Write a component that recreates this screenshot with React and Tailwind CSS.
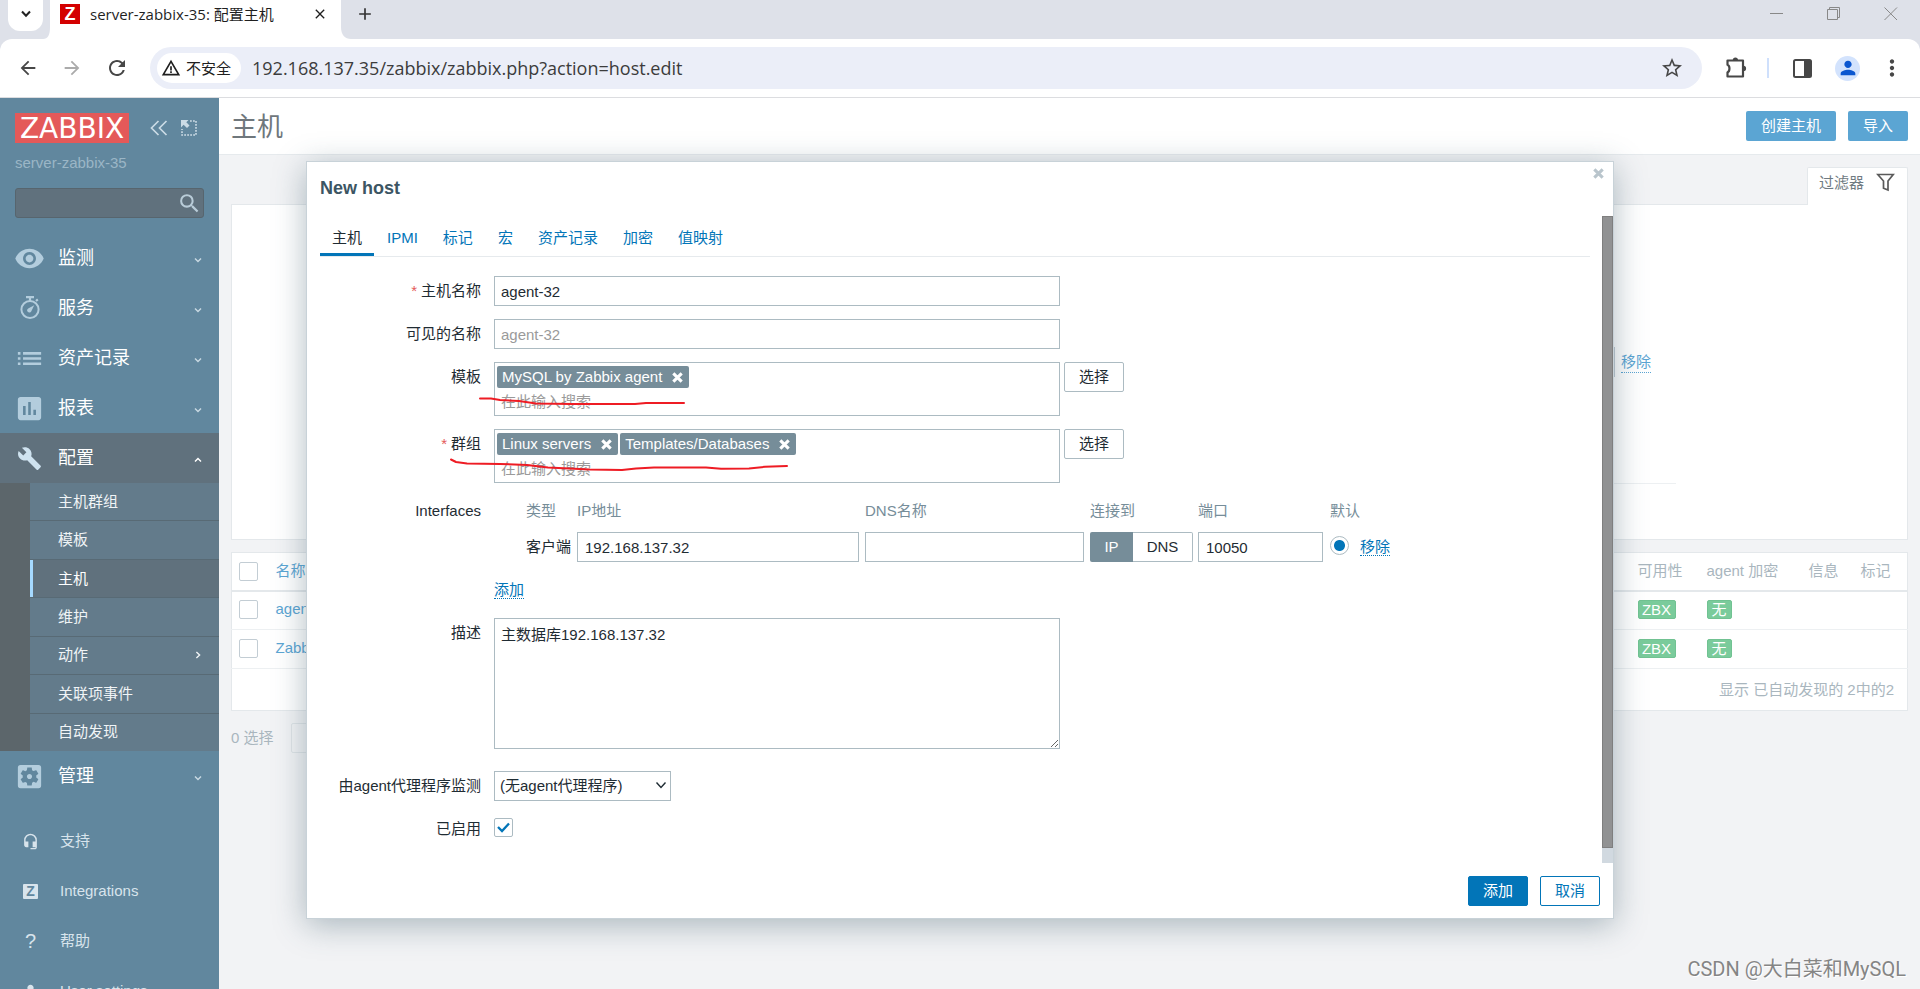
import { useState } from "react";
import {
  MdVisibility,
  MdList,
  MdPoll,
  MdBuild,
  MdSettingsApplications,
  MdArrowBack,
  MdArrowForward,
  MdRefresh,
  MdStarBorder,
  MdPerson,
  MdMoreVert,
  MdWarningAmber,
  MdClose,
  MdAdd,
  MdHeadsetMic,
  MdSearch,
} from "react-icons/md";

const CONFIG_ITEMS = [
  { label: "主机群组" },
  { label: "模板" },
  { label: "主机", active: true },
  { label: "维护" },
  { label: "动作", sub: true },
  { label: "关联项事件" },
  { label: "自动发现" },
];

const TABS = ["主机", "IPMI", "标记", "宏", "资产记录", "加密", "值映射"];

const HOSTS = ["agent", "Zabbix server"];

function StopwatchIcon() {
  return (
    <svg width="22" height="24" viewBox="0 0 22 24" fill="none">
      <path d="M7 1.2h8M11 2v3M17 5l1.8-1.6" stroke="currentColor" strokeWidth="2.2" />
      <circle cx="11" cy="13.5" r="8.6" stroke="currentColor" strokeWidth="2" />
      <path d="M15.2 9.2 9.2 12.4a2.2 2.2 0 1 0 3 3z" fill="currentColor" />
    </svg>
  );
}

function Chevron({ className }) {
  return (
    <svg className={className} width="8" height="8" viewBox="0 0 8 8" fill="none">
      <path d="M1 2.4 4 5.6 7 2.4" stroke="currentColor" strokeWidth="1.4" />
    </svg>
  );
}

function BoldCross({ size = 10 }) {
  return (
    <svg width={size} height={size} viewBox="0 0 10 10">
      <path d="M1.2 1.2 8.8 8.8M8.8 1.2 1.2 8.8" stroke="currentColor" strokeWidth="2.8" />
    </svg>
  );
}

function BrowserBar() {
  return (
    <div className="bg-[#dee1e9] font-['Open_Sans','Noto_Sans_CJK_SC',sans-serif]">
      <div className="flex h-[39px] items-start">
        <button className="ml-2 flex h-[31px] w-[35px] items-center justify-center rounded-b-xl bg-white pb-1">
          <svg width="10" height="10" viewBox="0 0 10 10" fill="none">
            <path d="M1 2.5 5 6.8 9 2.5" stroke="#222" strokeWidth="2" />
          </svg>
        </button>
        <svg className="mt-[27px]" width="7" height="12" viewBox="0 0 7 12">
          <path d="M7 0v12H0C5 12 7 8 7 0z" fill="#fff" />
        </svg>
        <div className="flex h-[39px] w-[291px] items-start bg-white pl-[10px] pr-[13px] pt-1">
          <span className="flex h-5 w-5 items-center justify-center bg-[#d40000] font-['Liberation_Sans',sans-serif] text-lg font-bold leading-5 text-white">
            Z
          </span>
          <span className="ml-[10px] flex-1 whitespace-nowrap text-[15px] leading-5 text-[#1f1f1f]">
            server-zabbix-35: 配置主机
          </span>
          <button aria-label="Close tab" className="mt-[2px] text-[#1f1f1f]">
            <MdClose size={16} />
          </button>
        </div>
        <svg className="mt-[27px]" width="10" height="12" viewBox="0 0 10 12">
          <path d="M0 0v12h10C4 12 0 8 0 0z" fill="#fff" />
        </svg>
        <button aria-label="New tab" className="ml-1 mt-1 text-[#333]">
          <MdAdd size={20} />
        </button>
        <div className="ml-auto mr-[22px] mt-[7px] flex gap-[43px] text-[#888]">
          <button aria-label="Minimize">
            <svg width="14" height="14" viewBox="0 0 14 14">
              <path d="M0 6.5h13" stroke="currentColor" />
            </svg>
          </button>
          <button aria-label="Restore">
            <svg width="14" height="14" viewBox="0 0 14 14" fill="none" stroke="currentColor">
              <path d="M.5 2.5h10v10H.5zM2.5 2.5v-2h10v10h-2" />
            </svg>
          </button>
          <button aria-label="Close window">
            <svg width="14" height="14" viewBox="0 0 14 14" stroke="currentColor">
              <path d="M.5.5l12.5 12.5M13 .5.5 13" />
            </svg>
          </button>
        </div>
      </div>
      <div className="flex h-[59px] items-center rounded-t-xl border-b border-[#dcdde0] bg-white pl-[17px] pr-[15px] text-[#474747]">
        <button aria-label="Back">
          <MdArrowBack size={22} />
        </button>
        <button aria-label="Forward" className="ml-[22px] text-[#ababab]">
          <MdArrowForward size={22} />
        </button>
        <button aria-label="Reload" className="ml-[22px]">
          <MdRefresh size={24} />
        </button>
        <div className="ml-[21px] flex h-[42px] flex-1 items-center rounded-full bg-[#ebeef8] pl-[7px] pr-[18px]">
          <span className="flex h-[30px] items-center gap-[5px] rounded-full bg-white pl-1 pr-[10px] text-[15px] leading-5 text-[#1f1f1f]">
            <MdWarningAmber size={20} />
            不安全
          </span>
          <input
            aria-label="Address"
            className="ml-[11px] flex-1 bg-transparent text-lg leading-6 text-[#3c3c3c] outline-none"
            defaultValue="192.168.137.35/zabbix/zabbix.php?action=host.edit"
          />
          <button aria-label="Bookmark">
            <MdStarBorder size={24} />
          </button>
        </div>
        <button aria-label="Extensions" className="ml-[23px]">
          <svg width="22" height="22" viewBox="0 0 22 22" fill="none">
            <path
              d="M2.500 3.500h15.500v16H2.500v-4.200c2.600-.9 2.600-6.700 0-7.600z"
              stroke="#474747"
              strokeWidth="2.200"
              strokeLinejoin="round"
            />
            <path d="M7.800 3a2.600 2.600 0 0 1 5.200 0zM18.500 8.800a2.600 2.600 0 0 1 0 5.200z" fill="#474747" />
          </svg>
        </button>
        <span className="ml-5 h-5 w-[2px] bg-[#cfe0fc]" />
        <button aria-label="Side panel" className="ml-6">
          <svg width="19" height="19" viewBox="0 0 19 19">
            <rect x="1" y="1" width="17" height="17" rx="1.5" fill="none" stroke="#474747" strokeWidth="2" />
            <path d="M11 1h7v17h-7z" fill="#474747" />
          </svg>
        </button>
        <span className="ml-[23px] flex h-[25px] w-[25px] items-center justify-center rounded-full bg-[#d3e3fd] text-[#0b57d0]">
          <MdPerson size={22} />
        </span>
        <button aria-label="Menu" className="ml-[19px]">
          <MdMoreVert size={26} />
        </button>
      </div>
    </div>
  );
}

function MenuRow({ icon, label, open }) {
  return (
    <a
      href="#"
      className={
        open
          ? "flex h-[50px] items-center bg-[#60717d] pl-[14px] pr-[17px] text-white"
          : "flex h-[50px] items-center pl-[14px] pr-[17px] text-white"
      }
    >
      <span
        className={
          open
            ? "flex w-[31px] justify-center text-[#cfe3f0]"
            : "flex w-[31px] justify-center text-[#b3cddd]"
        }
      >
        {icon}
      </span>
      <span className="ml-[13px] flex-1 text-lg leading-6">{label}</span>
      <Chevron className={open ? "mt-1 rotate-180" : "mt-1 text-[#c8d8e2]"} />
    </a>
  );
}

function FooterRow({ icon, label }) {
  return (
    <a href="#" className="flex h-[50px] shrink-0 items-center pl-[21px] text-[15px] leading-5 text-[#d8e4ec]">
      <span className="flex w-[19px] justify-center">{icon}</span>
      <span className="ml-5">{label}</span>
    </a>
  );
}

function Sidebar() {
  return (
    <nav className="flex w-[219px] shrink-0 flex-col overflow-hidden bg-[#61879e]">
      <div className="flex items-center pl-[15px] pt-[15px]">
        <a
          href="#"
          className="flex h-[30px] w-[114px] items-center justify-center bg-[#e45959] pt-[2px] font-['DejaVu_Sans',sans-serif] text-[28px] leading-7 text-white"
        >
          ZABBIX
        </a>
        <button aria-label="Collapse sidebar" className="ml-[21px] text-[#cbdbe5]">
          <svg width="18" height="16" viewBox="0 0 18 16" fill="none">
            <path d="M8.5 1 1.5 8l7 7M16.5 1l-7 7 7 7" stroke="currentColor" strokeWidth="1.7" />
          </svg>
        </button>
        <button aria-label="Hide sidebar" className="ml-[13px] text-[#cbdbe5]">
          <svg width="16" height="16" viewBox="0 0 16 16" fill="none">
            <path d="M9 1h6v14H1V9" stroke="currentColor" strokeWidth="1.6" strokeDasharray="1.8 1.2" />
            <path d="M0 0h7.5L5.3 2.2 8.5 5.4 6 8 2.6 4.800 0 7.500z" fill="currentColor" />
          </svg>
        </button>
      </div>
      <div className="pl-[15px] pt-[10px] text-[15px] leading-5 text-[#9bb6c6]">server-zabbix-35</div>
      <div className="mx-[15px] mt-[15px] flex h-[30px] shrink-0 items-center rounded-[3px] border border-[#57656e] bg-[#60717d] pr-[1px]">
        <input aria-label="Search" className="w-full flex-1 bg-transparent px-2 text-white outline-none" />
        <button aria-label="Search" className="text-[#b9ccd8]">
          <MdSearch size={25} />
        </button>
      </div>
      <div className="mt-[15px]">
        <MenuRow icon={<MdVisibility size={31} />} label="监测" />
        <MenuRow icon={<StopwatchIcon />} label="服务" />
        <MenuRow icon={<MdList size={31} />} label="资产记录" />
        <MenuRow icon={<MdPoll size={31} />} label="报表" />
        <MenuRow icon={<MdBuild size={25} />} label="配置" open />
        <ul className="flex h-[268px] flex-col bg-[#5c666b] pl-[30px] text-[15px] leading-5 text-[#f0f4f6]">
          {CONFIG_ITEMS.map((item) => (
            <li
              key={item.label}
              className="flex-1 border-b border-[#586a75] bg-[#637b8b] last:border-b-0"
            >
              <a
                href="#"
                className={
                  item.active
                    ? "flex h-full items-center border-l-3 border-[#a5d9ff] bg-[#60717d] pl-[25px] pr-[17px] text-white"
                    : "flex h-full items-center pl-7 pr-[17px]"
                }
              >
                <span className="flex-1">{item.label}</span>
                {item.sub && <Chevron className="-rotate-90" />}
              </a>
            </li>
          ))}
        </ul>
        <MenuRow icon={<MdSettingsApplications size={31} />} label="管理" />
      </div>
      <div className="mt-[15px]">
        <FooterRow icon={<MdHeadsetMic size={17} />} label="支持" />
        <FooterRow
          icon={
            <span className="flex h-[15px] w-[15px] items-center justify-center rounded-[1px] bg-[#d8e4ec] text-sm font-bold leading-[15px] text-[#61879e]">
              Z
            </span>
          }
          label="Integrations"
        />
        <FooterRow icon={<span className="text-xl">?</span>} label="帮助" />
        <FooterRow icon={<MdPerson size={22} />} label="User settings" />
      </div>
    </nav>
  );
}

function HostList() {
  return (
    <main className="flex-1 bg-[#f2f3f5]">
      <header className="flex h-[57px] items-center border-b border-[#e6eaed] bg-white pl-3 pr-3">
        <h1 className="flex-1 pt-[2px] text-[26px] leading-8 text-[#6f777c]">主机</h1>
        <button className="h-[30px] rounded-[2px] bg-[#5ba5d3] px-[15px] text-[15px] leading-5 text-white">
          创建主机
        </button>
        <button className="ml-3 h-[30px] rounded-[2px] bg-[#5ba5d3] px-[15px] text-[15px] leading-5 text-white">
          导入
        </button>
      </header>

      <div className="px-3 pt-3">
        <div className="flex justify-end">
          <button className="-mb-px flex h-[38px] w-[101px] items-start rounded-t-[2px] border border-b-0 border-[#e4e8eb] bg-white pl-[11px] pt-[5px] text-[15px] leading-5 text-[#6f7b82]">
            过滤器
            <svg className="ml-3" width="19" height="19" viewBox="0 0 19 19" fill="none">
              <path d="M1.800 1.500h15.400L12 8v9l-4.500-1.800V8z" stroke="#5a5a5a" strokeWidth="1.7" />
            </svg>
          </button>
        </div>
        <section className="flex h-[336px] flex-col items-end border border-[#e4e8eb] bg-white pr-[231px]">
          <div className="mt-[142px] flex items-center pr-[25px]">
            <input
              aria-label="Tag value"
              className="mr-[6px] h-[30px] w-[180px] border border-[#c3cdd4] bg-white"
            />
            <a
              href="#"
              className="border-b border-dotted border-[#5ba5d3] text-[15px] leading-5 text-[#5ba5d3]"
            >
              移除
            </a>
          </div>
          <div className="mt-[106px] h-px w-[400px] bg-[#edf0f2]" />
        </section>

        <table className="mt-3 w-full border border-[#e4e8eb] bg-white text-left text-[15px] leading-5 text-[#a9b6be]">
          <thead>
            <tr className="h-[38px] border-b-2 border-[#e4e8eb]">
              <th className="w-11 pl-[7px]">
                <input
                  type="checkbox"
                  aria-label="Select all"
                  className="block h-[19px] w-[19px] appearance-none rounded-[2px] border border-[#c3cdd4] bg-white"
                />
              </th>
              <th className="font-normal text-[#5ba5d3]">名称</th>
              <th className="w-[69px] font-normal">可用性</th>
              <th className="w-[102px] font-normal">agent 加密</th>
              <th className="w-[52px] font-normal">信息</th>
              <th className="w-[47px] font-normal">标记</th>
            </tr>
          </thead>
          <tbody>
            {HOSTS.map((host) => (
              <tr key={host} className="h-[39px] border-b border-[#edf0f2]">
                <td className="pb-[2px] pl-[7px]">
                  <input
                    type="checkbox"
                    aria-label={host}
                    className="block h-[19px] w-[19px] appearance-none rounded-[2px] border border-[#c3cdd4] bg-white"
                  />
                </td>
                <td className="pb-[2px]">
                  <a href="#" className="text-[#5ba5d3]">
                    {host}
                  </a>
                </td>
                <td className="pb-[2px]">
                  <span className="block h-[19px] w-[38px] rounded-[2px] border border-[#71c292] bg-[#7acb9b] text-center leading-[17px] text-white">
                    ZBX
                  </span>
                </td>
                <td className="pb-[2px]">
                  <span className="block h-[19px] w-[25px] rounded-[2px] border border-[#71c292] bg-[#7acb9b] text-center leading-[17px] text-white">
                    无
                  </span>
                </td>
                <td />
                <td />
              </tr>
            ))}
            <tr className="h-[42px]">
              <td colSpan={6} className="pr-[13px] text-right">
                显示 已自动发现的 2中的2
              </td>
            </tr>
          </tbody>
        </table>

        <div className="mt-3 flex items-center text-[15px] leading-5 text-[#a9b6be]">
          <span>0 选择</span>
          <button disabled className="ml-[17px] h-[30px] rounded-[2px] border border-[#dfe4e7] px-[15px]">
            启用
          </button>
        </div>
      </div>
    </main>
  );
}

function FormRow({ label, required, htmlFor, children }) {
  return (
    <div className="grid grid-cols-[161px_1fr] items-start gap-x-[13px]">
      <label htmlFor={htmlFor} className="text-right leading-[30px]">
        {required && <span className="mr-1 text-[#e45959]">*</span>}
        {label}
      </label>
      <div>{children}</div>
    </div>
  );
}

function MultiSelect({ id, items }) {
  return (
    <div className="flex items-start gap-1">
      <div className="h-[54px] w-[566px] border border-[#acbbc2] pl-[2px] pt-[3px]">
        <ul className="flex gap-[2px]">
          {items.map((item) => (
            <li
              key={item}
              className="flex h-[22px] items-center rounded-[2px] bg-[#768d99] pl-[5px] pr-[6px] text-white"
            >
              <span className="leading-5">{item}</span>
              <button type="button" aria-label={"Remove " + item} className="ml-[10px]">
                <BoldCross size={11} />
              </button>
            </li>
          ))}
        </ul>
        <input
          id={id}
          placeholder="在此输入搜索"
          className="block h-[26px] w-[300px] bg-transparent pl-1 leading-5 outline-none placeholder:text-[#9a9a9a]"
        />
      </div>
      <button type="button" className="h-[30px] rounded-[2px] border border-[#acbbc2] px-[14px] leading-5">
        选择
      </button>
    </div>
  );
}

function InterfacesTable() {
  return (
    <table className="w-[897px] table-fixed text-left">
      <colgroup>
        <col className="w-[83px]" />
        <col className="w-[288px]" />
        <col className="w-[225px]" />
        <col className="w-[108px]" />
        <col className="w-[132px]" />
        <col className="w-[30px]" />
        <col className="w-[31px]" />
      </colgroup>
      <thead>
        <tr className="h-9 align-top leading-[30px] text-[#768d99]">
          <th className="pl-8 font-normal">类型</th>
          <th className="font-normal">IP地址</th>
          <th className="font-normal">DNS名称</th>
          <th className="font-normal">连接到</th>
          <th className="font-normal">端口</th>
          <th className="whitespace-nowrap font-normal" colSpan={2}>
            默认
          </th>
        </tr>
      </thead>
      <tbody>
        <tr className="h-[30px]">
          <td className="pl-8">客户端</td>
          <td>
            <input
              aria-label="IP地址"
              defaultValue="192.168.137.32"
              className="block h-[30px] w-[282px] border border-[#acbbc2] px-[7px] outline-none"
            />
          </td>
          <td>
            <input
              aria-label="DNS名称"
              className="block h-[30px] w-[219px] border border-[#acbbc2] px-[7px] outline-none"
            />
          </td>
          <td>
            <div className="flex h-[30px] w-[103px]">
              <button type="button" className="w-[43px] rounded-l-[2px] bg-[#768d99] text-white">
                IP
              </button>
              <button
                type="button"
                className="flex-1 rounded-r-[2px] border border-l-0 border-[#acbbc2] text-center"
              >
                DNS
              </button>
            </div>
          </td>
          <td>
            <input
              aria-label="端口"
              defaultValue="10050"
              className="block h-[30px] w-[125px] border border-[#acbbc2] px-[7px] outline-none"
            />
          </td>
          <td>
            <input
              type="radio"
              name="default-interface"
              aria-label="默认"
              defaultChecked
              className="mb-1 block h-[19px] w-[19px] appearance-none rounded-full border border-[#acbbc2] checked:bg-[radial-gradient(circle,#0275b8_5px,#fff_6px)]"
            />
          </td>
          <td className="whitespace-nowrap">
            <a href="#" className="border-b border-dotted border-[#0275b8] text-[#0275b8]">
              移除
            </a>
          </td>
        </tr>
      </tbody>
    </table>
  );
}

function NewHostDialog() {
  const [tab, setTab] = useState("主机");

  return (
    <div
      role="dialog"
      aria-label="New host"
      className="absolute left-1/2 top-[161px] w-[1308px] max-w-full -translate-x-1/2 border border-[#c8d2d8] bg-white text-[15px] leading-5 text-[#1f2c33] shadow-[0_6px_30px_rgba(60,90,105,0.4)]"
    >
      <div className="flex h-[54px] items-start justify-between pl-[13px] pr-[9px] pt-[6px]">
        <h2 className="mt-2 text-lg font-bold leading-6 text-[#3c5563]">New host</h2>
        <button aria-label="Close" className="text-[#b9c5cc]">
          <BoldCross size={11} />
        </button>
      </div>

      <div className="flex">
        <form className="min-w-0 flex-1 pb-[19px] pl-[13px] pr-3">
          <div role="tablist" className="flex h-[41px] gap-px border-b border-[#e6eaed]">
            {TABS.map((name) => (
              <button
                key={name}
                type="button"
                role="tab"
                aria-selected={tab === name}
                onClick={() => setTab(name)}
                className={
                  tab === name
                    ? "border-b-3 border-[#0275b8] px-3 pt-[7px]"
                    : "border-b-3 border-transparent px-3 pt-[7px] text-[#0275b8]"
                }
              >
                {name}
              </button>
            ))}
          </div>

          <div className="mt-[19px] flex flex-col gap-[13px]">
            <FormRow label="主机名称" required htmlFor="host">
              <input
                id="host"
                defaultValue="agent-32"
                className="block h-[30px] w-[566px] border border-[#acbbc2] px-[6px] outline-none"
              />
            </FormRow>
            <FormRow label="可见的名称" htmlFor="visible-name">
              <input
                id="visible-name"
                placeholder="agent-32"
                className="block h-[30px] w-[566px] border border-[#acbbc2] px-[6px] outline-none placeholder:text-[#9a9a9a]"
              />
            </FormRow>
            <FormRow label="模板" htmlFor="templates">
              <MultiSelect id="templates" items={["MySQL by Zabbix agent"]} />
            </FormRow>
            <FormRow label="群组" required htmlFor="groups">
              <MultiSelect id="groups" items={["Linux servers", "Templates/Databases"]} />
            </FormRow>
            <FormRow label="Interfaces">
              <InterfacesTable />
              <div className="mt-[13px] h-[30px] pt-[5px]">
                <a href="#" className="border-b border-dotted border-[#0275b8] text-[#0275b8]">
                  添加
                </a>
              </div>
            </FormRow>
            <FormRow label="描述" htmlFor="description">
              <div className="h-[140px]">
                <textarea
                  id="description"
                  defaultValue="主数据库192.168.137.32"
                  className="block h-[131px] w-[566px] border border-[#acbbc2] px-[6px] py-[6px] outline-none"
                />
              </div>
            </FormRow>
            <FormRow label="由agent代理程序监测" htmlFor="proxy">
              <div className="relative w-[177px]">
                <select
                  id="proxy"
                  className="block h-[30px] w-full appearance-none border border-[#acbbc2] bg-white px-[5px] outline-none"
                >
                  <option>(无agent代理程序)</option>
                </select>
                <svg
                  className="pointer-events-none absolute right-1 top-[10px]"
                  width="12"
                  height="9"
                  viewBox="0 0 12 9"
                  fill="none"
                >
                  <path d="M1.500 1.500 6 6.500l4.500-5" stroke="#1f2c33" strokeWidth="1.4" />
                </svg>
              </div>
            </FormRow>
            <FormRow label="已启用" htmlFor="enabled">
              <div className="flex h-[30px] items-start pt-1">
                <span className="relative">
                  <input
                    id="enabled"
                    type="checkbox"
                    defaultChecked
                    className="peer block h-[19px] w-[19px] appearance-none rounded-[2px] border border-[#acbbc2]"
                  />
                  <svg
                    className="pointer-events-none absolute left-[3px] top-1 hidden peer-checked:block"
                    width="13"
                    height="11"
                    viewBox="0 0 13 11"
                    fill="none"
                  >
                    <path d="M1 5l4 4 7-7.500" stroke="#0275b8" strokeWidth="2.300" />
                  </svg>
                </span>
              </div>
            </FormRow>
          </div>
        </form>
        <div className="flex w-[11px] flex-col bg-[#d1d9e0] pb-[15px]">
          <div className="flex-1 border border-[#7f7f7f] bg-[#919293]" />
        </div>
      </div>

      <div className="flex justify-end gap-3 pb-3 pr-[13px] pt-[13px]">
        <button className="h-[30px] w-[60px] rounded-[2px] border border-[#0275b8] bg-[#0275b8] text-white">
          添加
        </button>
        <button className="h-[30px] w-[60px] rounded-[2px] border border-[#0275b8] text-[#0275b8]">
          取消
        </button>
      </div>

      {/* hand-drawn marks under the template and group fields */}
      <svg
        className="pointer-events-none absolute left-[143px] top-[230px]"
        width="350"
        height="90"
        viewBox="450 392 350 90"
        fill="none"
        stroke="#ee1c24"
        strokeWidth="2"
        strokeLinecap="round"
        strokeLinejoin="round"
      >
        <path d="M480 398.500H491L500 400 519 401 536 403.500 572 404H635L646 403H684" />
        <path d="M451 459.500 456 462 467 463.500 500 464 527 465 548 467.500 590 469.500 622 470 636 468.500 654 467.500 706 467.500 721 468.800 749 468.500 765 466.800 787 466" />
      </svg>
    </div>
  );
}

export default function App() {
  return (
    <div className="relative flex h-screen flex-col overflow-hidden font-['Liberation_Sans','Noto_Sans_CJK_SC',sans-serif]">
      <BrowserBar />
      <div className="flex min-h-0 flex-1">
        <Sidebar />
        <HostList />
      </div>
      <NewHostDialog />
      <div className="pointer-events-none absolute bottom-[6px] right-[14px] font-['Roboto','Noto_Sans_CJK_SC',sans-serif] text-xl leading-7 text-[#858585] [text-shadow:1px_1px_0_#fff]">
        CSDN @大白菜和MySQL
      </div>
    </div>
  );
}
